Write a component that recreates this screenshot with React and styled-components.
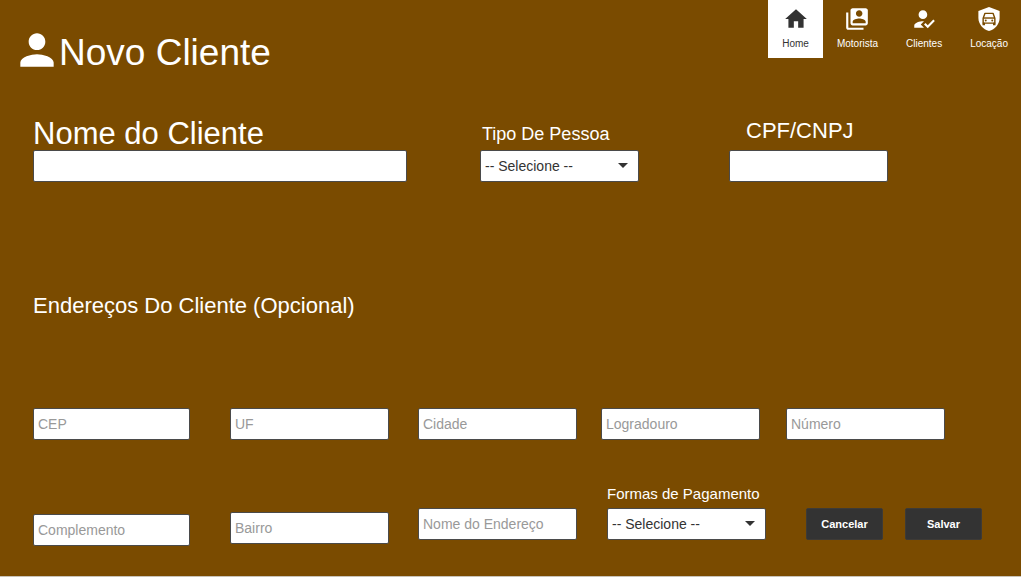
import React from "react";
import styled, { createGlobalStyle } from "styled-components";
import { MdHome, MdSwitchAccount, MdHowToReg, MdPerson } from "react-icons/md";

const GlobalStyle = createGlobalStyle`
  *, *::before, *::after { box-sizing: border-box; }
  body {
    margin: 0;
    background: #7a4b00;
    color: #fff;
    font-family: "Liberation Sans", Arial, sans-serif;
  }
`;

const Page = styled.div`
  min-height: 100vh;
  padding-bottom: 28px;
  border-bottom: 1px solid #c9c3b8;
`;

const Header = styled.header`
  display: flex;
  justify-content: space-between;
  align-items: flex-start;
`;

const Title = styled.h1`
  display: flex;
  align-items: flex-start;
  margin: 0;
  padding: 25px 0 0 12px;
  font-size: 37px;
  line-height: 56px;
  font-weight: 400;
  svg {
    width: 50px;
    height: 50px;
    margin-right: -3px;
  }
`;

const Nav = styled.nav`
  display: flex;
  a:last-child { padding-right: 13px; }
`;

const NavLink = styled.a`
  display: flex;
  flex-direction: column;
  align-items: center;
  gap: 6px;
  height: 58px;
  padding: 6px 14px 0;
  font-size: 10px;
  line-height: 12px;
  text-decoration: none;
  color: ${(p) => (p.$active ? "#333" : "#fff")};
  background: ${(p) => (p.$active ? "#fff" : "transparent")};
  svg { width: 26px; height: 26px; }
`;

const Form = styled.form`
  padding-left: 33px;
`;

const MainFields = styled.div`
  display: grid;
  grid-template-columns: 425fr 227fr 292fr;
  column-gap: 22px;
  align-items: end;
  padding-top: 37px;
`;

const Field = styled.div`
  display: flex;
  flex-direction: column;
`;

const Label = styled.label`
  font-size: ${(p) => p.$size}px;
  line-height: ${(p) => p.$line}px;
  padding-left: ${(p) => p.$indent || 0}px;
  padding-bottom: ${(p) => p.$below || 0}px;
  white-space: nowrap;
`;

const Input = styled.input`
  width: 100%;
  max-width: ${(p) => p.$max || 159}px;
  height: 32px;
  padding: 0 4px;
  border: 1px solid #4a4a4a;
  border-radius: 2px;
  background: #fff;
  color: #333;
  font: 14px "Liberation Sans", Arial, sans-serif;
  &::placeholder { color: #999; opacity: 1; }
`;

const SelectBox = styled.div`
  position: relative;
  width: 100%;
  max-width: 159px;
  svg {
    position: absolute;
    right: 11px;
    top: 13px;
    width: 10px;
    height: 5px;
    fill: #333;
    pointer-events: none;
  }
`;

const Select = styled.select`
  display: block;
  appearance: none;
  width: 100%;
  height: 32px;
  padding: 0 24px 0 4px;
  border: 1px solid #4a4a4a;
  border-radius: 2px;
  background: #fff;
  color: #333;
  font: 14px "Liberation Sans", Arial, sans-serif;
`;

const SectionTitle = styled.h2`
  margin: 0;
  padding: 111px 0 89px;
  font-size: 22px;
  line-height: 26px;
  font-weight: 400;
`;

const Address = styled.div`
  display: grid;
  grid-template-columns: 175fr 166fr 161fr 420fr;
  column-gap: 22px;
`;

const Stack = styled.div`
  display: flex;
  flex-direction: column;
  gap: ${(p) => p.$gap}px;
`;

const StreetRow = styled.div`
  display: grid;
  grid-template-columns: 163fr 235fr;
  column-gap: 22px;
`;

const PaymentRow = styled.div`
  display: grid;
  grid-template-columns: 177fr 77fr 116fr;
  column-gap: 22px;
  align-items: end;
  padding-left: 6px;
`;

const Button = styled.button`
  width: 77px;
  height: 32px;
  padding: 0;
  border: 1px solid #3d3a36;
  border-radius: 2px;
  background: #333;
  color: #fff;
  font: bold 11px "Liberation Sans", Arial, sans-serif;
`;

function ShieldCarIcon() {
  return (
    <svg viewBox="0 0 24 24" aria-hidden="true">
      <path fill="currentColor" d="M12 1 2.2 4.600V11c0 5.600 4.200 10.500 9.800 12 5.600-1.500 9.800-6.400 9.800-12V4.600z" />
      <g fill="none" stroke="#7a4b00" strokeWidth="1.300" strokeLinejoin="round">
        <path d="M6.600 15.800v-4.600l1.700-4.400h7.400l1.700 4.400v4.600z" />
        <path d="M6.600 11.100h10.800" />
      </g>
      <g fill="#7a4b00">
        <path d="M6 15.500h2.300v2.300H6zM15.700 15.500H18v2.300h-2.300z" />
        <circle cx="9" cy="13.400" r="0.900" />
        <circle cx="15" cy="13.400" r="0.900" />
      </g>
    </svg>
  );
}

function SelectField({ id }) {
  return (
    <SelectBox>
      <Select id={id} defaultValue="">
        <option value="">-- Selecione --</option>
      </Select>
      <svg viewBox="0 0 10 5" aria-hidden="true"><path d="M0 0h10L5 5z" /></svg>
    </SelectBox>
  );
}

function TextField({ name, max }) {
  return <Input type="text" placeholder={name} aria-label={name} $max={max} />;
}

export default function App() {
  return (
    <Page>
      <GlobalStyle />
      <Header>
        <Title><MdPerson />Novo Cliente</Title>
        <Nav>
          <NavLink href="#home" $active><MdHome />Home</NavLink>
          <NavLink href="#motorista"><MdSwitchAccount />Motorista</NavLink>
          <NavLink href="#clientes"><MdHowToReg />Clientes</NavLink>
          <NavLink href="#locacao"><ShieldCarIcon />Locação</NavLink>
        </Nav>
      </Header>
      <Form onSubmit={(e) => e.preventDefault()}>
        <MainFields>
          <Field>
            <Label htmlFor="nome" $size={31} $line={32}>Nome do Cliente</Label>
            <Input id="nome" type="text" $max={374} />
          </Field>
          <Field>
            <Label htmlFor="tipo" $size={18} $line={20} $indent={2} $below={6}>Tipo De Pessoa</Label>
            <SelectField id="tipo" />
          </Field>
          <Field>
            <Label htmlFor="documento" $size={22} $line={26} $indent={17} $below={6}>CPF/CNPJ</Label>
            <Input id="documento" type="text" />
          </Field>
        </MainFields>
        <SectionTitle>Endereços Do Cliente (Opcional)</SectionTitle>
        <Address>
          <Stack $gap={74}>
            <TextField name="CEP" max={157} />
            <TextField name="Complemento" max={157} />
          </Stack>
          <Stack $gap={72}>
            <TextField name="UF" />
            <TextField name="Bairro" />
          </Stack>
          <Stack $gap={68}>
            <TextField name="Cidade" />
            <TextField name="Nome do Endereço" />
          </Stack>
          <Stack $gap={44}>
            <StreetRow>
              <TextField name="Logradouro" />
              <TextField name="Número" />
            </StreetRow>
            <PaymentRow>
              <Field>
                <Label htmlFor="pagamento" $size={15} $line={20} $below={4}>Formas de Pagamento</Label>
                <SelectField id="pagamento" />
              </Field>
              <Button type="button">Cancelar</Button>
              <Button type="submit">Salvar</Button>
            </PaymentRow>
          </Stack>
        </Address>
      </Form>
    </Page>
  );
}
